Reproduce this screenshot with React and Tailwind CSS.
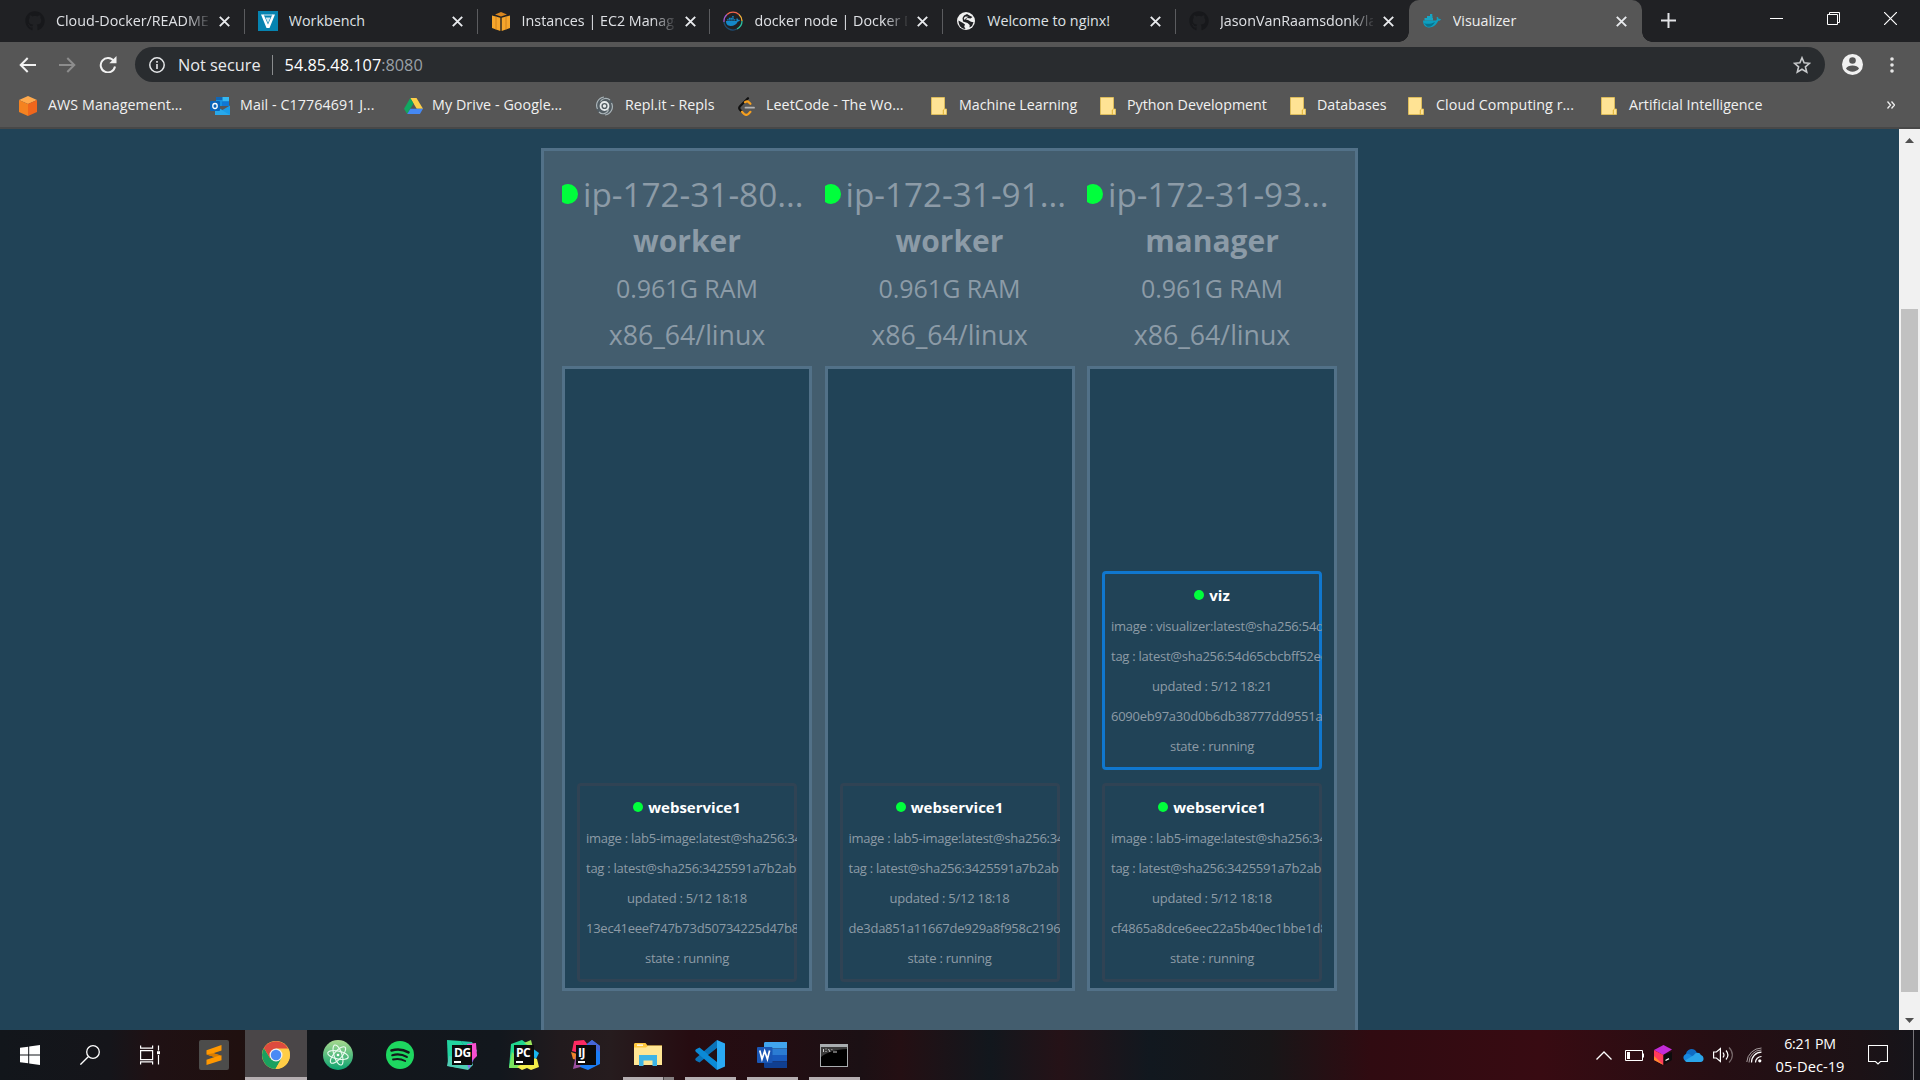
import React from "react";
import { FaGithub, FaDocker } from "react-icons/fa";

/* ---------- favicons ---------- */
const Github = () => <FaGithub className="size-5 text-[#17181b]" />;

const Veracode = () => (
  <svg className="size-5" viewBox="0 0 20 20">
    <rect width="20" height="20" fill="#0683b0" />
    <path d="M3 3.500h2.600L10 13.500l4.400-10H17L11.500 17h-3z" fill="#fff" />
    <path d="M5 3.500h10v1H5.500zM7.500 6.500h5L10 12z" fill="#cfe8f1" />
  </svg>
);

const AwsCube = () => (
  <svg className="h-[19px] w-[18px]" viewBox="0 0 18 19">
    <path d="M9 0l6 2.500-6 2-6-2z" fill="#d9861f" />
    <path d="M0 3.500l8.300 2.300V19L0 16z" fill="#f6a62c" />
    <path d="M18 3.500L9.700 5.800V19L18 16z" fill="#f6a62c" />
    <path d="M4 4.600v13M14 4.600v13" stroke="#c97a18" strokeWidth=".8" />
  </svg>
);

const DockerRing = () => (
  <span className="relative flex size-5 items-center justify-center">
    <svg className="absolute inset-0 size-5" viewBox="0 0 20 20" fill="none" strokeWidth="1.300">
      <path d="M1 11A9 9 0 0 1 4 3.500" stroke="#a05ad0" />
      <path d="M4 3.500A9 9 0 0 1 16 3.500" stroke="#f0644b" />
      <path d="M16 3.500A9 9 0 0 1 19 10" stroke="#f3b13b" />
      <path d="M19 10A9 9 0 0 1 14 18" stroke="#2bc0a0" />
      <path d="M14 18A9 9 0 0 1 1 11" stroke="#1d4d73" />
    </svg>
    <FaDocker className="size-[14px] text-[#1488c9]" />
  </span>
);

const Globe = () => (
  <svg className="size-[18px]" viewBox="0 0 18 18">
    <circle cx="9" cy="9" r="9" fill="#f1f1f1" />
    <path d="M1.500 8.500L6 11l2 1.500-.8 2L8.500 17C4 17 1.500 13 1.500 8.500z" fill="#202124" />
    <path d="M7 3.500l3-1.500 2.500 1.500 3 1.500-2 1.500-3-.5-2 1.200 3 1 2.500 1.500 2.500.5-1.500 3.800-2.500 1.500.2-2.500-2.200-2L6 9.500 5.500 6z" fill="#202124" />
    <path d="M8.500 4.500l3 .3-2.500 1.400L7.500 8 6.800 6z" fill="#f1f1f1" />
  </svg>
);

const Whale = () => (
  <svg className="h-[14px] w-[18px]" viewBox="0 0 18 14">
    <path d="M0 6.500h13c1-.5 1-2 .5-3l.8-.8c1 .7 1.300 1.300 1.400 2.200 1-.2 1.800 0 2.300.4-.5 1-1.500 1.500-2.800 1.500C13 11.500 10 13.500 6.500 13.500 2.500 13.500 0 11 0 6.500z" fill="#0d9fc0" />
    <path d="M1.500 4h8.500v2.500H1.500zM4 2h5.500v2.200H4zM7 0h2.300v2.200H7z" fill="#17a5c4" />
    <path d="M1 9c3 1.500 7 1 11-1-2 4-5 5.500-8 4.500z" fill="#08748f" />
  </svg>
);

/* ---------- bookmark icons ---------- */
const AwsOrange = () => (
  <svg className="h-5 w-[18px]" viewBox="0 0 18 20">
    <path d="M9 0l9 4-9 4-9-4z" fill="#ffa94d" />
    <path d="M0 4l9 4v12l-9-4z" fill="#f58220" />
    <path d="M18 4L9 8v12l9-4z" fill="#f0661c" />
  </svg>
);
const Outlook = () => (
  <svg className="h-[18px] w-5" viewBox="0 0 20 18">
    <path d="M6 0h13v9H6z" fill="#1066b5" />
    <path d="M6 3h6.500v6H6z" fill="#1490df" />
    <path d="M12.500 0H19v4.500h-6.500z" fill="#35b8f1" />
    <path d="M12.500 4.500H19V9h-6.500z" fill="#0f78d4" />
    <path d="M5 9l7.500 4L20 8.500V18H5z" fill="#1a9be6" />
    <path d="M5 9l15 9H5z" fill="#28a8ea" />
    <rect y="4" width="10" height="10" rx="1" fill="#0a64b8" />
    <ellipse cx="5" cy="9" rx="2.200" ry="2.500" fill="none" stroke="#fff" strokeWidth="1.300" />
  </svg>
);
const Drive = () => (
  <svg className="h-4 w-[19px]" viewBox="0 0 19 16">
    <path d="M6.300 0h6.200L19 10.800h-6.300z" fill="#ffcf48" />
    <path d="M6.300 0L9.500 5.400 3.200 16 0 10.800z" fill="#11a861" />
    <path d="M6.400 10.800H19L15.900 16H3.200z" fill="#4588f4" />
  </svg>
);
const Replit = () => (
  <svg className="h-5 w-[19px]" viewBox="0 0 19 20" fill="none">
    <circle cx="9.500" cy="10" r="8.800" fill="#525c62" />
    <path d="M9 1C3 2 0 8 2.500 13M10 19c6-1 9-7 6.500-12M4 16c3 3 8 2 9.500-2.500M15 4C12 1.500 7.500 2 5.500 5.500" stroke="#aab3b7" strokeWidth="1.200" />
    <circle cx="9.500" cy="10" r="4" stroke="#e6eaec" strokeWidth="1.800" />
    <circle cx="9.500" cy="10" r="1.700" fill="#e6eaec" />
  </svg>
);
const Leet = () => (
  <svg className="h-[19px] w-[17px]" viewBox="0 0 17 19" fill="none" strokeWidth="2.200" strokeLinecap="round">
    <path d="M10 1.200L2 9.300c-1 1-1 2.300 0 3.400l2 2" stroke="#111" />
    <path d="M4 14.700l1.800 2c1.500 1.400 3.400 1.400 4.800 0l1.800-1.900M7 5.200c1.600-1 3-.9 4 .2l1.400 1.400" stroke="#f7a01e" />
    <path d="M7.500 10.700H16" stroke="#b3b3b3" strokeWidth="1.800" />
  </svg>
);
const Folder = () => (
  <svg className="h-[18px] w-4" viewBox="0 0 16 18">
    <path d="M.5.5h13v11.500h2v5.500H.5z" fill="#ffe394" stroke="#e8c455" strokeWidth=".8" />
    <path d="M12.300 17.500v-4.500l1.200-1" fill="none" stroke="#d9a928" strokeWidth=".9" />
  </svg>
);

/* ---------- browser ---------- */
const TabClose = () => (
  <svg className="size-[11px] shrink-0" viewBox="0 0 11 11" stroke="#e8eaed" strokeWidth="1.900">
    <path d="M.8.8l9.400 9.400M10.200.8L.8 10.200" />
  </svg>
);

const tabs = [
  { icon: <Github />, title: "Cloud-Docker/README.md", fade: true },
  { icon: <Veracode />, title: "Workbench" },
  { icon: <AwsCube />, title: "Instances | EC2 Management", fade: true },
  { icon: <DockerRing />, title: "docker node | Docker Docs", fade: true },
  { icon: <Globe />, title: "Welcome to nginx!" },
  { icon: <Github />, title: "JasonVanRaamsdonk/lab5", fade: true },
];

function TabBody({ icon, title, fade }) {
  return (
    <>
      <span className="flex w-5 shrink-0 justify-center">{icon}</span>
      <span className={"ml-[11px] w-[153px] shrink-0 overflow-hidden whitespace-nowrap text-[14.300px] leading-5 " + (fade ? "[mask-image:linear-gradient(to_right,black_130px,transparent_156px)]" : "")}>
        {title}
      </span>
      <span className="ml-[10px] flex">
        <TabClose />
      </span>
    </>
  );
}

function TabStrip() {
  return (
    <div className="flex h-[42px] bg-[#202124] text-[#dfe1e5]">
      <div className="flex pl-[12px]">
        {tabs.map((t, i) => (
          <div key={i} className="relative flex w-[232.800px] items-center pl-[13px]">
            <TabBody {...t} />
            {i < 5 && <span className="absolute right-0 top-[9px] h-[25px] w-px bg-[#5b5c5f]" />}
          </div>
        ))}
      </div>
      <div className="relative flex w-[233px] items-center rounded-t-[10px] bg-[#565656] pl-[13px] text-[#eeeeee]">
        <TabBody icon={<Whale />} title="Visualizer" />
        <span className="absolute -left-[10px] bottom-0 size-[10px] bg-[radial-gradient(circle_at_0_0,transparent_9.500px,#565656_10px)]" />
        <span className="absolute -right-[10px] bottom-0 size-[10px] bg-[radial-gradient(circle_at_100%_0,transparent_9.500px,#565656_10px)]" />
      </div>
      <svg className="ml-[19px] mt-[13px] size-[15px]" viewBox="0 0 15 15" stroke="#e2e3e6" strokeWidth="2">
        <path d="M7.500 0v15M0 7.500h15" />
      </svg>
      <div className="ml-auto flex items-center gap-[44px] pb-[5px] pr-[23px]">
        <span className="h-px w-[13px] bg-white" />
        <svg className="size-[13px]" viewBox="0 0 13 13" fill="none" stroke="#fff">
          <path d="M.5 2.500h10v10H.5zM2.500 2.500v-2h10v10h-2" />
        </svg>
        <svg className="size-[13px]" viewBox="0 0 13 13" stroke="#fff" strokeWidth="1.200">
          <path d="M0 0l13 13M13 0L0 13" />
        </svg>
      </div>
    </div>
  );
}

function Toolbar() {
  return (
    <div className="flex h-[45px] items-center bg-[#565656] pl-[19px]">
      <svg className="h-4 w-[17px]" viewBox="0 0 17 16" fill="none" stroke="#f1f1f1" strokeWidth="2">
        <path d="M17 8H2M8.700 1L1.700 8l7 7" />
      </svg>
      <svg className="ml-[23px] h-4 w-[17px]" viewBox="0 0 17 16" fill="none" stroke="#8d8d8d" strokeWidth="2">
        <path d="M0 8h15M8.300 1l7 7-7 7" />
      </svg>
      <svg className="ml-[23px] h-[17px] w-[18px]" viewBox="0 0 18 17" fill="none" stroke="#f1f1f1" strokeWidth="2">
        <path d="M14.800 5A7.200 7.200 0 1 0 16 10.500" />
        <path d="M17.500 0v7.200h-7.200z" fill="#f1f1f1" stroke="none" />
      </svg>
      <div className="ml-[18px] flex h-[35px] w-[1690px] items-center rounded-full bg-[#292c2f] pl-[14px] pr-[14px] text-[16.300px]">
        <svg className="size-4" viewBox="0 0 16 16" fill="none" stroke="#e6e8ea">
          <circle cx="8" cy="8" r="7.200" strokeWidth="1.500" />
          <path d="M8 7v5M8 4v1.800" strokeWidth="1.600" />
        </svg>
        <span className="ml-[13px] mt-px text-[#e8eaed]">Not secure</span>
        <span className="ml-[11px] h-5 w-px bg-[#8a8c8e]" />
        <span className="ml-3 mt-px text-white">
          54.85.48.107<span className="text-[#9aa0a6]">:8080</span>
        </span>
        <svg className="ml-auto size-[18px]" viewBox="0 0 18 18" fill="none" stroke="#c8cacc" strokeWidth="1.600">
          <path d="M9 1.800l2.100 5 5.400.5-4.100 3.500 1.300 5.300L9 13.200l-4.700 2.900 1.300-5.300L1.500 7.300l5.400-.5z" />
        </svg>
      </div>
      <svg className="ml-[17px] size-[21px]" viewBox="0 0 21 21">
        <circle cx="10.500" cy="10.500" r="10.500" fill="#f1f1f1" />
        <circle cx="10.500" cy="6.500" r="3.300" fill="#565656" />
        <path d="M4 14.500c1.500-4 11.500-4 13 0-3 4.200-10 4.200-13 0z" fill="#565656" />
      </svg>
      <svg className="ml-[27px] h-4 w-1" viewBox="0 0 4 16" fill="#e6e6e6">
        <circle cx="2" cy="2" r="1.800" />
        <circle cx="2" cy="8" r="1.800" />
        <circle cx="2" cy="14" r="1.800" />
      </svg>
    </div>
  );
}

const bookmarks = [
  { w: "w-[191px]", gap: "ml-[29px]", icon: <AwsOrange />, label: "AWS Management..." },
  { w: "w-[194px]", gap: "ml-[30px]", icon: <Outlook />, label: "Mail - C17764691 J..." },
  { w: "w-[191px]", gap: "ml-[28px]", icon: <Drive />, label: "My Drive - Google..." },
  { w: "w-[143px]", gap: "ml-[30px]", icon: <Replit />, label: "Repl.it - Repls" },
  { w: "w-[193px]", gap: "ml-[28px]", icon: <Leet />, label: "LeetCode - The Wo..." },
  { w: "w-[169px]", gap: "ml-[28px]", icon: <Folder />, label: "Machine Learning" },
  { w: "w-[190px]", gap: "ml-[27px]", icon: <Folder />, label: "Python Development" },
  { w: "w-[118px]", gap: "ml-[27px]", icon: <Folder />, label: "Databases" },
  { w: "w-[193px]", gap: "ml-[28px]", icon: <Folder />, label: "Cloud Computing r..." },
  { w: "w-[192px]", gap: "ml-[28px]", icon: <Folder />, label: "Artificial Intelligence" },
];

function Bookmarks() {
  return (
    <div className="flex h-[42px] items-center border-b-2 border-[#484848] bg-[#565656] pb-[4px] pl-[19px] text-[14.250px] text-[#f1f1f1]">
      {bookmarks.map((b) => (
        <div key={b.label} className={"grid shrink-0 items-center whitespace-nowrap " + b.w}>
          <span className="col-start-1 row-start-1 flex pt-[2px]">{b.icon}</span>
          <span className={"col-start-1 row-start-1 " + b.gap + (b.label.endsWith("...") ? " tracking-[0.080px]" : "")}>{b.label}</span>
        </div>
      ))}
      <svg className="ml-auto mr-[25px] h-2 w-[8px]" viewBox="0 0 8 8" fill="none" stroke="#eee" strokeWidth="1.300">
        <path d="M.5.5L3.500 4l-3 3.500M4.500.5l3 3.500-3 3.500" />
      </svg>
    </div>
  );
}

/* ---------- visualizer ---------- */
const web = (id) => ({
  name: "webservice1",
  border: "border-[#304354]",
  lines: ["image : lab5-image:latest@sha256:34", "tag : latest@sha256:3425591a7b2ab1", "updated : 5/12 18:18", id, "state : running"],
});
const nodes = [
  { name: "ip-172-31-80...", role: "worker", tasks: [web("13ec41eeef747b73d50734225d47b8")] },
  { name: "ip-172-31-91...", role: "worker", tasks: [web("de3da851a11667de929a8f958c2196f")] },
  {
    name: "ip-172-31-93...",
    role: "manager",
    tasks: [
      {
        name: "viz",
        border: "border-[#1077ce]",
        lines: ["image : visualizer:latest@sha256:54d", "tag : latest@sha256:54d65cbcbff52ee", "updated : 5/12 18:21", "6090eb97a30d0b6db38777dd9551a", "state : running"],
      },
      web("cf4865a8dce6eec22a5b40ec1bbe1d8"),
    ],
  },
];

function Task({ name, border, lines }) {
  return (
    <div className={"h-[199px] overflow-clip rounded-[4px] border-[3px] pt-[5px] [overflow-clip-margin:border-box] " + border}>
      <div className="flex h-8 items-center justify-center gap-[5px] text-[15px] font-bold text-white">
        <span className="size-[10px] rounded-full bg-[#00ff3c]" />
        {name}
      </div>
      {lines.map((l, i) => (
        <div key={i} className={"h-[30px] whitespace-nowrap px-[6px] text-[13px] leading-[30px] tracking-[-0.250px] text-[#8d9ba6] " + (l.length < 24 ? "text-center" : "text-left")}>
          {l}
        </div>
      ))}
    </div>
  );
}

function Node({ name, role, tasks }) {
  return (
    <div className="flex w-[250px] shrink-0 flex-col text-center text-[#8c9ba7]">
      <div className="flex h-[50px] items-center overflow-hidden whitespace-nowrap">
        <span className="-ml-1 mt-[2px] size-5 shrink-0 rounded-full bg-[#00ff3c]" />
        <span className="ml-[5px] mt-[2px] text-[33.300px] leading-[50px]">{name}</span>
      </div>
      <div className="h-[45px] text-[30px] font-bold leading-[46px]">{role}</div>
      <div className="h-[49px] text-[25px] leading-[51px]">0.961G RAM</div>
      <div className="h-[43px] text-[26.700px] leading-[45px]">x86_64/linux</div>
      <div className="mt-[11px] flex h-[625px] flex-col justify-end gap-[13px] border-[3px] border-[#527188] bg-[#214357] px-3 pb-[6px]">
        {tasks.map((t) => (
          <Task key={t.name} {...t} />
        ))}
      </div>
    </div>
  );
}

function Page() {
  return (
    <div className="flex h-[901px] overflow-hidden bg-[#214357]">
      <div className="flex-1 pl-[541px] pt-[19px]">
        <div className="flex h-[900px] w-[817px] gap-[12.500px] border-[3px] border-[#527188] bg-[#435d6e] px-[18px] pt-[17px]">
          {nodes.map((n) => (
            <Node key={n.name} {...n} />
          ))}
        </div>
      </div>
      <div className="flex w-[21px] flex-col items-center bg-[#f1f1f1]">
        <svg className="mt-[9px] h-[5px] w-[9px]" viewBox="0 0 9 5">
          <path d="M0 5L4.500 0 9 5z" fill="#505050" />
        </svg>
        <div className="mt-[166px] h-[683px] w-[17px] bg-[#c1c1c1]" />
        <svg className="mt-[26px] h-[5px] w-[9px]" viewBox="0 0 9 5">
          <path d="M0 0l4.500 5L9 0z" fill="#505050" />
        </svg>
      </div>
    </div>
  );
}

/* ---------- taskbar icons ---------- */
const Windows = () => (
  <svg className="size-5" viewBox="0 0 20 20" fill="#fff">
    <path d="M0 2.800L8.200 1.700v7.700H0zM9.200 1.500L20 0v9.400H9.200zM0 10.400h8.200v7.900L0 17.200zM9.200 10.400H20V20L9.200 18.500z" />
  </svg>
);
const Search = () => (
  <svg className="size-5" viewBox="0 0 20 20" fill="none" stroke="#fff" strokeWidth="1.300">
    <circle cx="13" cy="7" r="6.300" />
    <path d="M8.500 11.500L.4 19.600" />
  </svg>
);
const TaskView = () => (
  <svg className="size-5" viewBox="0 0 20 20" fill="none" stroke="#fff" strokeWidth="1.200">
    <path d="M.6 5.600h12v9H.6zM.6.500v2.600h12V.5M.6 19.500v-2.600h12v2.600M18.500.5v5M18.500 10v9.500" />
    <path d="M17 6.200h3v3h-3z" fill="#fff" stroke="none" />
  </svg>
);
const Sublime = () => (
  <svg className="size-[30px]" viewBox="0 0 30 30">
    <rect width="30" height="30" rx="2" fill="#4c4c4b" />
    <path d="M7.500 10.200L22.500 5v5.600l-8.200 2.700 8.200 2.500v4.500L7.500 25v-5.200l8.200-2.700-8.200-2.600z" fill="#ff9800" />
    <path d="M7.500 14.500l8.200 2.600 6.800-2.200v.9l-8.200-2.500z" fill="#d97c00" />
  </svg>
);
const Chrome = () => (
  <svg className="size-7" viewBox="0 0 28 28">
    <circle cx="14" cy="14" r="14" fill="#ffcd46" />
    <path d="M1.900 7A14 14 0 0 0 13.500 28l6-10.500L14 14 8 17z" fill="#1aa15f" />
    <path d="M14 7.500h12.200A14 14 0 0 1 13.500 28l6-10.500z" fill="#ffcd46" />
    <path d="M1.900 7l6.300 10.500L14 7.500h12.200A14 14 0 0 0 1.900 7z" fill="#dd4b3e" />
    <circle cx="14" cy="14" r="6.500" fill="#f1f1f1" />
    <circle cx="14" cy="14" r="5.200" fill="#4a8af4" />
  </svg>
);
const Atom = () => (
  <svg className="size-[30px]" viewBox="0 0 30 30" fill="none">
    <defs>
      <linearGradient id="atomBg" x2="0" y2="1">
        <stop stopColor="#a9d98f" />
        <stop offset="1" stopColor="#0ba370" />
      </linearGradient>
    </defs>
    <circle cx="15" cy="15" r="15" fill="url(#atomBg)" />
    <g stroke="#eafaf0" strokeWidth="1.100">
      <ellipse cx="15" cy="15" rx="10.500" ry="4" transform="rotate(12 15 15)" />
      <ellipse cx="15" cy="15" rx="10.500" ry="4" transform="rotate(72 15 15)" />
      <ellipse cx="15" cy="15" rx="10.500" ry="4" transform="rotate(132 15 15)" />
    </g>
    <circle cx="15" cy="15" r="1.300" fill="#fff" />
  </svg>
);
const Spotify = () => (
  <svg className="size-7" viewBox="0 0 28 28" fill="none" stroke="#13181b" strokeLinecap="round">
    <circle cx="14" cy="14" r="14" fill="#1ed760" stroke="none" />
    <path d="M5.500 9.500c5.500-1.600 12-1 17 1.900" strokeWidth="2.600" />
    <path d="M6.300 14.200c5-1.300 10.300-.7 14.500 1.700" strokeWidth="2.200" />
    <path d="M7 18.500c4.300-1 8.500-.5 12.200 1.500" strokeWidth="1.800" />
  </svg>
);
function JetBrains({ label, shapes }) {
  return (
    <span className="relative flex size-[30px] items-center justify-center">
      <svg className="absolute inset-0 size-[30px]" viewBox="0 0 30 30">
        {shapes.map(([d, fill]) => (
          <path key={d} d={d} fill={fill} />
        ))}
      </svg>
      <span className="relative flex size-5 flex-col bg-[#0b0b0b] pl-[2px] pt-[2px] text-[12px] font-bold leading-[12px] tracking-[-0.500px] text-white">
        {label}
        <span className="mt-[2px] h-[1.500px] w-[7px] bg-white" />
      </span>
    </span>
  );
}
const Explorer = () => (
  <svg className="h-6 w-7" viewBox="0 0 28 24">
    <path d="M0 1.500C0 .5.500 0 1.500 0h10l2 2.500H28V22H0z" fill="#ffc83d" />
    <path d="M3 1.500h6v1.300H3z" fill="#fff" />
    <path d="M0 4.500h12L14 2.700h14V22H0z" fill="#ffe694" />
    <path d="M5 12h18v11h-4.500v-5.500h-9V23H5z" fill="#3db4e6" />
  </svg>
);
const VsCode = () => (
  <svg className="size-[30px]" viewBox="0 0 30 30">
    <path d="M22 0v8.500L4.500 22.500 1 20.800c-1-.9-1-2 0-2.800z" fill="#0a72b8" />
    <path d="M4.500 7.500L22 21.500V30L1 12c-1-.9-1-2 0-2.800z" fill="#0b8ad6" />
    <path d="M22 0l8 3.500v23L22 30z" fill="#2aa9f3" />
    <path d="M22 8v14l-9-7z" fill="#211116" />
  </svg>
);
const Word = () => (
  <svg className="h-[26px] w-[30px]" viewBox="0 0 30 26">
    <path d="M7 1.500C7 .5 7.500 0 8.500 0H30v6.500H7z" fill="#41a5ee" />
    <path d="M7 6.500h23V13H7z" fill="#2b7cd3" />
    <path d="M7 13h23v6.500H7z" fill="#185abd" />
    <path d="M7 19.500h23V26H8.500c-1 0-1.500-.5-1.500-1.500z" fill="#103f91" />
    <rect y="5" width="15.500" height="16" rx="1" fill="#1a56b4" />
    <path d="M2.800 8.500l2.200 8.700 2.700-8.200 2.700 8.200 2.200-8.700" fill="none" stroke="#fff" strokeWidth="1.700" />
  </svg>
);
const Cmd = () => (
  <svg className="h-[23px] w-7" viewBox="0 0 28 23">
    <rect width="28" height="23" fill="#a9adb0" />
    <rect x="1" y="3" width="26" height="19" fill="#000" />
    <path d="M1 3h26v2C16 5.500 7 8 1 13z" fill="#3a3a3a" />
    <path d="M3.500 5v3M5.500 5h1M5.500 7.500h1M8.500 5l1.500 3M11.500 5.500h.8M13 8h4" stroke="#ccc" strokeWidth="1" fill="none" />
  </svg>
);

const apps = [
  { icon: <Sublime /> },
  { icon: <Chrome />, active: true },
  { icon: <Atom /> },
  { icon: <Spotify /> },
  {
    icon: (
      <JetBrains
        label="DG"
        shapes={[
          ["M0 0l14 1 7 10L12 28 1 26z", "#22d3a0"],
          ["M14 1l11 1 5 9-6 6z", "#23c9a5"],
          ["M20 4l9-1 1 13-5 5z", "#f84fd0"],
          ["M0 26L2 16l22 4 2 5-5 5z", "#4fcdb4"],
          ["M20 24l7-5-5 10z", "#8b6cf0"],
        ]}
      />
    ),
  },
  {
    icon: (
      <JetBrains
        label="PC"
        shapes={[
          ["M2 4L13 0l7 5-3 12L0 28z", "#22d88f"],
          ["M0 28L3 12l12 12-6 4z", "#7be35f"],
          ["M15 3l7-3 2 8z", "#9be85a"],
          ["M23 8l7 5-4 8z", "#18b6f0"],
          ["M8 27l16-9 4 1 2 8-8 3-4-2-5 2z", "#f4ee48"],
        ]}
      />
    ),
  },
  {
    icon: (
      <JetBrains
        label="IJ"
        shapes={[
          ["M0 12l6 2v6l-4-1z", "#f0842a"],
          ["M3 1l10-1 4 5-2 10L1 11z", "#fb2a62"],
          ["M2 29l3-14 12 10z", "#9a4fa0"],
          ["M16 4l5-4 8 6v18l-12 6-8-3z", "#1a7df5"],
          ["M16 4l5-4 8 6v6z", "#4766d8"],
        ]}
      />
    ),
  },
  { icon: <Explorer />, open: true, stacked: true },
  { icon: <VsCode />, open: true },
  { icon: <Word />, open: true },
  { icon: <Cmd />, open: true },
];

function Tray() {
  return (
    <div className="ml-auto flex items-center text-white">
      <svg className="h-[9px] w-4" viewBox="0 0 16 9" fill="none" stroke="#fff" strokeWidth="1.300">
        <path d="M.5 8.500L8 1l7.500 7.500" />
      </svg>
      <svg className="ml-[13px] h-[11px] w-[19px]" viewBox="0 0 19 11" fill="none" stroke="#fff">
        <path d="M.5.5h17v10H.5zM18.500 3.500v4" />
        <path d="M2 2h3v7H2z" fill="#fff" stroke="none" />
      </svg>
      <svg className="ml-[10px] h-5 w-[19px]" viewBox="0 0 19 20">
        <path d="M9.500 0L18 4.500 9 10 0 5z" fill="#c42bd8" />
        <path d="M0 5l9.500 5v10L0 15z" fill="#ff3a5c" />
        <path d="M0 11l9.500 9L0 15z" fill="#ff8a2c" />
        <path d="M18 7v8l-8.500 5V10z" fill="#0c0c0c" />
        <path d="M11.500 15.500l3.500-1.800" stroke="#fff" strokeWidth="1.300" />
      </svg>
      <svg className="ml-[10px] h-[13px] w-[21px]" viewBox="0 0 21 13">
        <path d="M4 9a5.500 5.500 0 0 1 1.500-8c3-1.800 6.500-.8 8 2l2 4z" fill="#0f6cc4" />
        <path d="M4.500 12.500C0 12.500-1 7 2.500 5.200c2-.9 4-.5 5.500 1l4 3z" fill="#1787df" />
        <path d="M11 6c1.500-3 6-3 6.800 0C21 6.500 22 12.500 17.500 13H4.500c-1 0-2-.5-2.800-1.300z" fill="#2aa5ea" />
      </svg>
      <svg className="ml-[9px] h-[18px] w-[21px]" viewBox="0 0 21 18" fill="none" stroke="#fff" strokeWidth="1.200">
        <path d="M.6 6h2.800l4-3.500v13L3.400 12H.6zM10 6.500c1.200 1.500 1.200 3.500 0 5M13 4.500c2.300 2.700 2.300 6.300 0 9" />
        <path d="M16 1.500c4.500 4.500 4.500 10.500 0 15" stroke="#77696b" />
      </svg>
      <svg className="ml-[12px] size-4" viewBox="0 0 16 16" fill="none" stroke="#fff" strokeWidth="1.200">
        <path d="M9.500 15.500A6 6 0 0 1 15.500 9.500M5.500 15.500A10 10 0 0 1 15.500 5.200" />
        <path d="M.8 15A15 15 0 0 1 15.500 1M3 15.500A12.500 12.500 0 0 1 15.500 3" stroke="#c9c2c3" strokeWidth=".8" />
        <circle cx="13.800" cy="13.800" r="1.600" fill="#fff" stroke="none" />
      </svg>
      <div className="ml-[13px] flex w-[70px] flex-col items-center whitespace-nowrap leading-[23px]">
        <span className="text-[14.200px] tracking-[-0.200px]">6:21 PM</span>
        <span className="text-[14.700px]">05-Dec-19</span>
      </div>
      <svg className="ml-[23px] h-5 w-5" viewBox="0 0 20 20" fill="none" stroke="#fff" strokeWidth="1.100">
        <path d="M.5.5h19v16h-7L10 19l-2.500-2.500h-7z" />
      </svg>
      <span className="ml-[25px] mr-[6px] h-[50px] w-px bg-[#77757a]" />
    </div>
  );
}

function Taskbar() {
  return (
    <div className="flex h-[50px] items-stretch bg-[linear-gradient(90deg,#12161b_0px,#15151a_110px,#1f1114_150px,#20100f_240px,#12161b_310px,#12171d_500px,#211a1d_560px,#261c1e_610px,#260c11_690px,#240d12_760px,#1b1014_860px,#240f13_900px,#12171d_990px,#251217_1060px,#11181f_1150px,#181618_1270px,#300b11_1370px,#380b12_1540px,#250e13_1720px,#1c1216_1860px,#15141a_1920px)]">
      <div className="flex w-[183px]">
        {[<Windows />, <Search />, <TaskView />].map((icon, i) => (
          <div key={i} className="flex w-[60px] items-center justify-center">
            {icon}
          </div>
        ))}
      </div>
      {apps.map((a, i) => (
        <div key={i} className={"flex w-[62px] flex-col items-center justify-between " + (a.active ? "bg-[#4a4648]" : "")}>
          <div className="flex h-[47px] items-center justify-center pt-[3px]">{a.icon}</div>
          {a.active && <span className="h-[3px] w-full bg-[#b5aeb1]" />}
          {a.open && (
            <span className="flex h-[3px] w-[51px] bg-[#b5aeb1]">
              {a.stacked && <span className="ml-auto w-[11px] border-l border-[#4a4648] bg-[#857f81]" />}
            </span>
          )}
        </div>
      ))}
      <Tray />
    </div>
  );
}

export default function App() {
  return (
    <div className="flex h-[1080px] w-[1920px] flex-col overflow-hidden font-['Open_Sans',sans-serif]">
      <TabStrip />
      <Toolbar />
      <Bookmarks />
      <Page />
      <Taskbar />
    </div>
  );
}
